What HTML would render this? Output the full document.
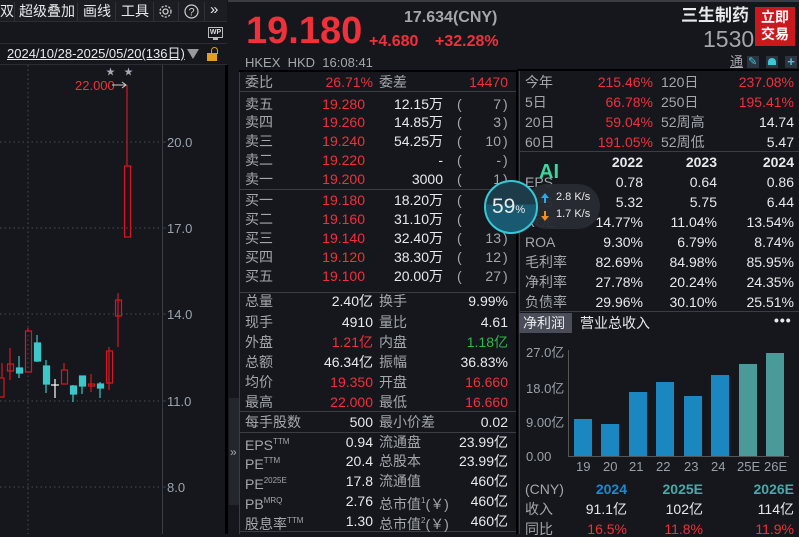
<!DOCTYPE html>
<html><head><meta charset="utf-8">
<style>
*{margin:0;padding:0;box-sizing:border-box}
body{width:799px;height:534px;background:#15171c;overflow:hidden;position:relative;font-family:"Liberation Sans","Noto Sans CJK SC",sans-serif;color:#c9ccd1}
.a{position:absolute;white-space:nowrap;font-size:14px;line-height:16px}
.r{text-align:right}
.red{color:#f0303a}.gr{color:#a3a7ad}.w{color:#e8e9eb}.g{color:#2fb84e}
.ln{position:absolute;height:1px;background:#3a3d44}
.vl{position:absolute;width:1px}
sup{font-size:8px;vertical-align:6px}
#wid{position:absolute;left:0;top:0;width:799px;height:534px;z-index:10}
</style></head><body>
<div style="position:absolute;left:228px;top:0;width:571px;height:2px;background:#3a3d44"></div>
<div style="position:absolute;left:0;top:0;width:227px;height:22px;background:#1b1d22;border-bottom:1px solid #2a2d33"></div>
<div class="a w" style="left:0;top:3px">双</div>
<div class="vl" style="left:14px;top:2px;height:19px;background:#2e3137"></div>
<div class="a w" style="left:19px;top:3px">超级叠加</div>
<div class="vl" style="left:77px;top:2px;height:19px;background:#2e3137"></div>
<div class="a w" style="left:83px;top:3px">画线</div>
<div class="vl" style="left:115px;top:2px;height:19px;background:#2e3137"></div>
<div class="a w" style="left:121px;top:3px">工具</div>
<div class="vl" style="left:153px;top:2px;height:19px;background:#2e3137"></div>
<svg style="position:absolute;left:158px;top:4px" width="15" height="15" viewBox="0 0 15 15"><circle cx="7.5" cy="7.5" r="2.5" fill="none" stroke="#ccc" stroke-width="1.3"/><circle cx="7.5" cy="7.5" r="5.5" fill="none" stroke="#ccc" stroke-width="1.3" stroke-dasharray="2.2 1.4"/></svg>
<div class="vl" style="left:178px;top:2px;height:19px;background:#2e3137"></div>
<svg style="position:absolute;left:184px;top:4px" width="15" height="15"><circle cx="7.5" cy="7.5" r="6.5" fill="none" stroke="#ccc" stroke-width="1.2"/><text x="7.5" y="11.5" font-size="11" fill="#ccc" text-anchor="middle" font-family="Liberation Sans">?</text></svg>
<div class="vl" style="left:204px;top:2px;height:19px;background:#2e3137"></div>
<div class="a w" style="left:210px;top:2px;font-size:15px">»</div>
<div style="position:absolute;left:208px;top:27px;width:15px;height:11px;border:1px solid #bbb;font-size:7px;color:#ddd;text-align:center;line-height:9px;font-weight:bold">WP</div>
<div style="position:absolute;left:213px;top:38px;width:5px;height:2px;background:#bbb"></div>
<div class="ln" style="left:0;top:43px;width:227px;background:#2a2d33"></div>
<div class="a w" style="left:7px;top:46px;font-size:13px;text-decoration:underline">2024/10/28-2025/05/20(136日)</div>
<div style="position:absolute;left:187px;top:49px;width:0;height:0;border-left:6px solid transparent;border-right:6px solid transparent;border-top:10px solid #999"></div>
<div style="position:absolute;left:207px;top:53px;width:10px;height:8px;background:#e0a020"></div>
<div style="position:absolute;left:211px;top:47px;width:7px;height:7px;border:1.5px solid #e0a020;border-bottom:none;border-radius:4px 4px 0 0"></div>
<div class="ln" style="left:0;top:64px;width:227px;background:#2a2d33"></div>
<svg style="position:absolute;left:0;top:65px" width="228" height="469">
<g stroke="#4a4d55" stroke-dasharray="1.5 3" stroke-width="1">
<line x1="28" y1="0" x2="28" y2="469"/>
<line x1="0" y1="77" x2="162" y2="77"/><line x1="0" y1="163" x2="162" y2="163"/><line x1="0" y1="249" x2="162" y2="249"/><line x1="0" y1="336" x2="162" y2="336"/><line x1="0" y1="422" x2="162" y2="422"/>
</g>
<line x1="162.5" y1="0" x2="162.5" y2="469" stroke="#3a3d44"/>
<g stroke="#3a3d44"><line x1="162" y1="77" x2="166" y2="77"/><line x1="162" y1="163" x2="166" y2="163"/><line x1="162" y1="249" x2="166" y2="249"/><line x1="162" y1="336" x2="166" y2="336"/><line x1="162" y1="422" x2="166" y2="422"/></g>
<g font-family="Liberation Sans" font-size="13" fill="#9aa4b0"><text x="167" y="82">20.0</text><text x="167" y="168">17.0</text><text x="167" y="254">14.0</text><text x="167" y="341">11.0</text><text x="167" y="427">8.0</text></g>
<line x1="226.5" y1="0" x2="226.5" y2="469" stroke="#000" stroke-width="3"/>
<g fill="none" stroke="#d81820" stroke-width="1.2">
<line x1="2" y1="298" x2="2" y2="313"/><rect x="-2" y="313" width="6" height="19"/>
<line x1="10" y1="283" x2="10" y2="315"/><rect x="7.5" y="299" width="6" height="7"/>
<line x1="28" y1="263" x2="28" y2="266"/><rect x="25.5" y="266" width="6" height="41"/>
<line x1="64" y1="298" x2="64" y2="305"/><rect x="61.5" y="305" width="6" height="14"/>
<line x1="91" y1="309" x2="91" y2="327"/><rect x="88.5" y="319" width="6" height="2"/>
<line x1="109" y1="282" x2="109" y2="325"/><rect x="106.5" y="286" width="6" height="32"/>
<line x1="118" y1="228" x2="118" y2="282"/><rect x="115.5" y="235" width="6" height="16"/>
<line x1="127" y1="20" x2="127" y2="101"/><rect x="124.5" y="101" width="6" height="71"/>
</g>
<g fill="#3cc8c8" stroke="#3cc8c8" stroke-width="1.2">
<line x1="19" y1="291" x2="19" y2="313"/><rect x="16.5" y="303" width="6" height="5"/>
<line x1="37" y1="270" x2="37" y2="297"/><rect x="34.5" y="278" width="6" height="18"/>
<line x1="46" y1="295" x2="46" y2="328"/><rect x="43.5" y="301" width="6" height="18"/>
<line x1="73" y1="320" x2="73" y2="337"/><rect x="70.5" y="321" width="6" height="8"/>
<line x1="82" y1="321" x2="82" y2="329"/><rect x="79.5" y="311" width="6" height="10"/>
<line x1="100" y1="317" x2="100" y2="333"/><rect x="97.5" y="319" width="6" height="4"/>
</g>
<g stroke="#fff" stroke-width="1.2"><line x1="55" y1="314" x2="55" y2="333"/><line x1="51" y1="320" x2="59" y2="320"/></g>
<text x="75" y="25" font-family="Liberation Sans" font-size="13" fill="#f0303a">22.000</text>
<line x1="112" y1="20" x2="126" y2="20" stroke="#ccc"/><polyline points="122,17 126,20 122,23" fill="none" stroke="#ccc"/>
<text x="106" y="10" font-size="9" fill="#aab">★</text><text x="124" y="10" font-size="9" fill="#aab">★</text>
</svg>
<div style="position:absolute;left:229px;top:398px;width:11px;height:107px;background:#23262c"></div>
<div class="a gr" style="left:230px;top:444px;font-size:12px">»</div>
<div class="vl" style="left:239px;top:70px;height:464px;background:#3a3d44;width:1px"></div>
<div class="vl" style="left:516px;top:70px;height:464px;background:#000;width:2px"></div>
<div class="a red" style="left:246px;top:10px;font-size:38px;line-height:42px;font-weight:bold">19.180</div>
<div class="a gr" style="left:404px;top:9px;font-size:16px;line-height:18px;font-weight:bold">17.634(CNY)</div>
<div class="a red" style="left:369px;top:33px;font-size:16px;line-height:18px;font-weight:bold">+4.680</div>
<div class="a red" style="left:435px;top:33px;font-size:16px;line-height:18px;font-weight:bold">+32.28%</div>
<div class="a gr" style="left:245px;top:55px;font-size:13px">HKEX&nbsp; HKD&nbsp; 16:08:41</div>
<div class="ln" style="left:239px;top:70px;width:278px;height:2px;background:#000"></div>
<div class="ln" style="left:239px;top:91px;width:277px"></div>
<div class="ln" style="left:239px;top:189px;width:277px"></div>
<div class="ln" style="left:239px;top:292px;width:277px"></div>
<div class="ln" style="left:239px;top:411px;width:277px"></div>
<div class="ln" style="left:239px;top:432px;width:277px"></div>
<div class="ln" style="left:239px;top:531px;width:277px"></div>
<div class="vl" style="left:519px;top:70px;height:464px;background:#3a3d44"></div>
<div class="a w" style="left:681px;top:6px;font-size:17px;line-height:20px;font-weight:bold">三生制药</div>
<div class="a gr" style="left:703px;top:27px;font-size:23px;line-height:24px">1530</div>
<div style="position:absolute;left:755px;top:7px;width:40px;height:39px;background:#c8191e;color:#fff;font-size:14px;line-height:17px;text-align:center;padding-top:2px;font-weight:bold">立即<br>交易</div>
<div class="a gr" style="left:730px;top:54px;font-size:13px;text-decoration:underline">通</div>
<div style="position:absolute;left:747px;top:56px;width:12px;height:12px;background:#2a3540"></div>
<div class="a" style="left:748px;top:54px;font-size:11px;color:#3cc8d8">✎</div>
<div style="position:absolute;left:766px;top:56px;width:12px;height:12px;background:#2a3540"></div>
<div style="position:absolute;left:768px;top:58px;width:8px;height:7px;background:#3cc8d8;border-radius:4px 4px 0 0"></div>
<div style="position:absolute;left:785px;top:56px;width:12px;height:12px;background:#2a3540;color:#3cc8d8;font-size:13px;line-height:12px;text-align:center;font-weight:bold">+</div>
<div class="ln" style="left:517px;top:69px;width:282px;height:2px;background:#000"></div>
<div class="ln" style="left:519px;top:151px;width:280px"></div>
<div class="ln" style="left:519px;top:311px;width:280px"></div>
<div style="position:absolute;left:519px;top:313px;width:53px;height:20px;background:#4a4d58"></div>
<div class="a w" style="left:523px;top:315px">净利润</div>
<div class="a w" style="left:580px;top:315px">营业总收入</div>
<div class="a w" style="left:774px;top:312px;font-weight:bold;letter-spacing:1px">•••</div>
<svg style="position:absolute;left:519px;top:340px" width="280" height="140">
<g font-family="Liberation Sans" font-size="13" fill="#9aa0a8"><text x="7" y="17">27.0亿</text><text x="7" y="53">18.0亿</text><text x="7" y="87">9.00亿</text><text x="7" y="121">0.00</text>
<text x="57" y="131">19</text><text x="84" y="131">20</text><text x="110" y="131">21</text><text x="137" y="131">22</text><text x="165" y="131">23</text><text x="192" y="131">24</text><text x="218" y="131">25E</text><text x="245" y="131">26E</text></g>
<line x1="49.5" y1="10" x2="49.5" y2="116" stroke="#555"/><line x1="49" y1="116.5" x2="270" y2="116.5" stroke="#555"/>
<g fill="#1a87c0"><rect x="55" y="79" width="18" height="37"/><rect x="82" y="84" width="18" height="32"/><rect x="110" y="52" width="18" height="64"/><rect x="137" y="42" width="18" height="74"/><rect x="165" y="56" width="18" height="60"/><rect x="192" y="35" width="18" height="81"/></g>
<g fill="#4a9a9a"><rect x="220" y="24" width="18" height="92"/><rect x="247" y="13" width="18" height="103"/></g>
</svg>
<div class="a gr" style="left:525px;top:481px">(CNY)</div>
<div class="a r" style="right:172px;top:481px;color:#1a8ad0;font-weight:bold">2024</div>
<div class="a r" style="right:96px;top:481px;color:#4aa8a8;font-weight:bold">2025E</div>
<div class="a r" style="right:5px;top:481px;color:#4aa8a8;font-weight:bold">2026E</div>
<div class="a gr" style="left:525px;top:501px">收入</div>
<div class="a w r" style="right:172px;top:501px">91.1亿</div>
<div class="a w r" style="right:96px;top:501px">102亿</div>
<div class="a w r" style="right:5px;top:501px">114亿</div>
<div class="a gr" style="left:525px;top:521px">同比</div>
<div class="a red r" style="right:172px;top:521px">16.5%</div>
<div class="a red r" style="right:96px;top:521px">11.8%</div>
<div class="a red r" style="right:5px;top:521px">11.9%</div>
<div id="data"></div>
<script>
var box=document.getElementById('data');
function d(l,t,txt,cls,right){var e=document.createElement('div');e.className='a '+cls+(right?' r':'');e.style.top=t+'px';if(right)e.style.right=(799-l)+'px';else e.style.left=l+'px';e.innerHTML=txt;box.appendChild(e);}
d(245,74,'委比','gr');d(373,74,'26.71%','red',1);d(379,74,'委差','gr');d(508,74,'14470','red',1);
var ob=[[104,'卖五','19.280','12.15万','7'],[122,'卖四','19.260','14.85万','3'],[141,'卖三','19.240','54.25万','10'],[160,'卖二','19.220','-','-'],[179,'卖一','19.200','3000','1'],
[200,'买一','19.180','18.20万','2'],[219,'买二','19.160','31.10万','6'],[238,'买三','19.140','32.40万','13'],[257,'买四','19.120','38.30万','12'],[276,'买五','19.100','20.00万','27']];
ob.forEach(function(r){var t=r[0]-8;d(245,t,r[1],'gr');d(365,t,r[2],'red',1);d(443,t,r[3],'w',1);d(457,t,'(','gr');d(501,t,r[4],'gr',1);d(503,t,')','gr');});
var st=[[301,'总量','2.40亿','w','换手','9.99%','w'],[322,'现手','4910','w','量比','4.61','w'],[342,'外盘','1.21亿','red','内盘','1.18亿','g'],[362,'总额','46.34亿','w','振幅','36.83%','w'],[382,'均价','19.350','red','开盘','16.660','red'],[402,'最高','22.000','red','最低','16.660','red'],[422,'每手股数','500','w','最小价差','0.02','w'],
[442,'EPS<sup>TTM</sup>','0.94','w','流通盘','23.99亿','w'],[461,'PE<sup>TTM</sup>','20.4','w','总股本','23.99亿','w'],[481,'PE<sup>2025E</sup>','17.8','w','流通值','460亿','w'],[501,'PB<sup>MRQ</sup>','2.76','w','总市值<sup>1</sup>(￥)','460亿','w'],[521,'股息率<sup>TTM</sup>','1.30','w','总市值<sup>2</sup>(￥)','460亿','w']];
st.forEach(function(r){var t=r[0]-8;d(245,t,r[1],'gr');d(373,t,r[2],r[3],1);d(379,t,r[4],'gr');d(508,t,r[5],r[6],1);});
var rt=[[82,'今年','215.46%','120日','237.08%','red'],[102,'5日','66.78%','250日','195.41%','red'],[122,'20日','59.04%','52周高','14.74','w'],[142,'60日','191.05%','52周低','5.47','w']];
rt.forEach(function(r){var t=r[0]-8;d(525,t,r[1],'gr');d(653,t,r[2],'red',1);d(661,t,r[3],'gr');d(794,t,r[4],r[5],1);});
d(643,154,'<b>2022</b>','w',1);d(717,154,'<b>2023</b>','w',1);d(794,154,'<b>2024</b>','w',1);
var fin=[[182,'EPS','0.78','0.64','0.86'],[202,'BPS','5.32','5.75','6.44'],[222,'ROE','14.77%','11.04%','13.54%'],[242,'ROA','9.30%','6.79%','8.74%'],[262,'毛利率','82.69%','84.98%','85.95%'],[282,'净利率','27.78%','20.24%','24.35%'],[302,'负债率','29.96%','30.10%','25.51%']];
fin.forEach(function(r){var t=r[0]-8;d(525,t,r[1],'gr');d(643,t,r[2],'w',1);d(717,t,r[3],'w',1);d(794,t,r[4],'w',1);});
</script>
<div id="wid">
<div style="position:absolute;left:525px;top:184px;width:75px;height:45px;background:rgba(40,43,50,0.95);border-radius:22px"></div>
<div class="a" style="left:539px;top:162px;font-size:20px;line-height:20px;font-weight:bold;color:#3ad8a0">AI</div>
<svg style="position:absolute;left:540px;top:192px" width="10" height="32"><path d="M5 1 L9 6 H6 V11 H4 V6 H1 Z" fill="#2aa8e8"/><path d="M5 29 L9 24 H6 V19 H4 V24 H1 Z" fill="#f0901e"/></svg>
<div class="a w" style="left:556px;top:191px;font-size:11px;line-height:13px">2.8 K/s</div>
<div class="a w" style="left:556px;top:208px;font-size:11px;line-height:13px">1.7 K/s</div>
<div style="position:absolute;left:484px;top:180px;width:54px;height:54px;border-radius:50%;background:linear-gradient(#1c3c4a 0 45%,#1a5a70 45%);border:2px solid #35c8d8"></div>
<div class="a w" style="left:492px;top:196px;font-size:21px;line-height:22px">59<span style="font-size:11px">%</span></div>
</div>
</body></html>
